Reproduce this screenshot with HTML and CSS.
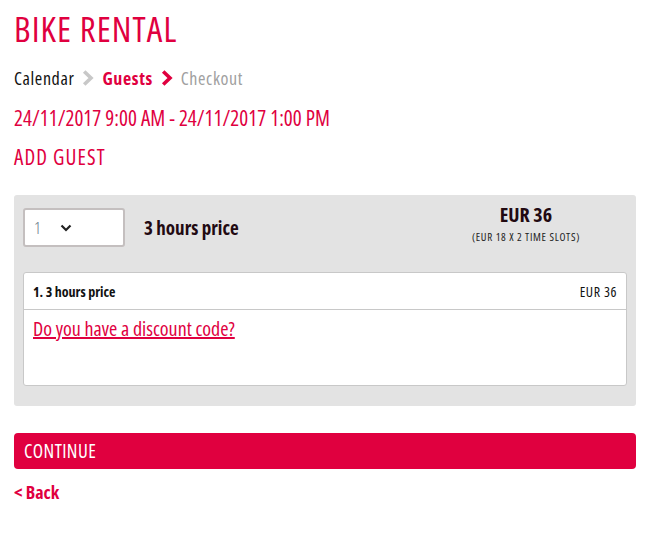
FILE: index.html
```html
<!DOCTYPE html>
<html>
<head>
<meta charset="utf-8">
<link rel="stylesheet" href="styles.css">
</head>
<body>
<div class="page">
  <h1 class="title">BIKE RENTAL</h1>
  <nav class="crumbs">
    <span class="crumb done">Calendar</span>
    <svg class="chev" width="12" height="16" viewBox="0 0 12 16"><path d="M2.2 1.5 L9 8 L2.2 14.5" fill="none" stroke="#c8c8c8" stroke-width="3.6"/></svg>
    <span class="crumb active">Guests</span>
    <svg class="chev" width="12" height="16" viewBox="0 0 12 16"><path d="M2.2 1.5 L9 8 L2.2 14.5" fill="none" stroke="#e0003f" stroke-width="3.6"/></svg>
    <span class="crumb todo">Checkout</span>
  </nav>
  <div class="dates">24/11/2017 9:00 AM - 24/11/2017 1:00 PM</div>
  <div class="add">ADD GUEST</div>

  <section class="panel">
    <div class="top">
      <div class="select">
        <span class="qty">1</span>
        <svg width="12" height="8" viewBox="0 0 12 8"><path d="M1.5 1.5 L6 6 L10.5 1.5" fill="none" stroke="#222" stroke-width="2.2"/></svg>
      </div>
      <div class="pname">3 hours price</div>
      <div class="price">
        <div class="amount">EUR 36</div>
        <div class="calc">(EUR 18 X 2 TIME SLOTS)</div>
      </div>
    </div>
    <div class="box">
      <div class="row">
        <span class="rname">1. 3 hours price</span>
        <span class="rprice">EUR 36</span>
      </div>
      <div class="body">
        <a class="discount" href="#">Do you have a discount code?</a>
      </div>
    </div>
  </section>

  <button class="continue">CONTINUE</button>
  <a class="back" href="#">&lt; Back</a>
</div>
</body>
</html>
```

FILE: styles.css
```css
* { box-sizing: border-box; }
body {
  margin: 0;
  background: #fff;
  font-family: "Open Sans", "DejaVu Sans Condensed", sans-serif;
  font-stretch: 75%;
  color: #111;
}
.page {
  width: 622px;
  margin-left: 14px;
  padding-top: 9px;
}
.title {
  margin: 0;
  font-weight: normal;
  font-size: 35px;
  line-height: 40px;
  letter-spacing: 1.1px;
  color: #e0003f;
}
.crumbs {
  display: flex;
  align-items: center;
  gap: 8px;
  margin-top: 18px;
  font-size: 18px;
  line-height: 22px;
  letter-spacing: 0.6px;
}
.crumb.done { color: #111; }
.crumb.active { color: #e0003f; font-weight: bold; }
.crumb.todo { color: #a0a0a0; }
.dates {
  margin-top: 16px;
  font-size: 21px;
  line-height: 26px;
  letter-spacing: 0.05px;
  color: #e0003f;
}
.add {
  margin-top: 13px;
  font-size: 21px;
  line-height: 26px;
  letter-spacing: 1.1px;
  color: #e0003f;
}
.panel {
  margin-top: 25px;
  background: #e3e3e3;
  border-radius: 3px;
  padding: 13px 9px 20px 9px;
}
.top {
  display: flex;
  align-items: center;
  height: 39px;
}
.select {
  width: 102px;
  height: 39px;
  background: #fff;
  border: 2px solid #c4bfbf;
  border-radius: 3px;
  display: flex;
  align-items: center;
  padding-left: 9px;
  gap: 19px;
  font-size: 17px;
  font-weight: 300;
  color: #6a7a8a;
}
.pname {
  margin-left: 19px;
  font-size: 19px;
  font-weight: bold;
  color: #220a12;
}
.price {
  margin-left: auto;
  margin-right: 47px;
  text-align: center;
  align-self: flex-start;
  margin-top: -5px;
}
.amount {
  font-size: 20px;
  font-weight: bold;
  color: #220a12;
  line-height: 24px;
}
.calc {
  margin-top: 3px;
  font-size: 11px;
  line-height: 14px;
  letter-spacing: 0.7px;
  color: #222;
}
.box {
  margin-top: 25px;
  background: #fff;
  border: 1px solid #c8c8c8;
  border-radius: 3px;
  height: 114px;
}
.row {
  display: flex;
  justify-content: space-between;
  align-items: center;
  height: 37px;
  padding: 0 9px;
  border-bottom: 1px solid #c8c8c8;
  font-size: 14px;
  color: #111;
}
.rname { font-weight: bold; }
.rprice { letter-spacing: 0.6px; }
.body { padding: 6px 9px; }
.discount {
  font-size: 20px;
  line-height: 26px;
  color: #e0003f;
  text-decoration: underline;
}
.continue {
  display: block;
  width: 100%;
  margin-top: 27px;
  height: 36px;
  border: none;
  border-radius: 4px;
  background: #e0003f;
  color: #fff;
  text-align: left;
  padding: 0 10px;
  font-family: inherit;
  font-stretch: 75%;
  font-size: 19px;
  letter-spacing: 0.4px;
}
.back {
  display: inline-block;
  margin-top: 11px;
  font-size: 18px;
  line-height: 24px;
  font-weight: bold;
  color: #e0003f;
  text-decoration: none;
}
```
